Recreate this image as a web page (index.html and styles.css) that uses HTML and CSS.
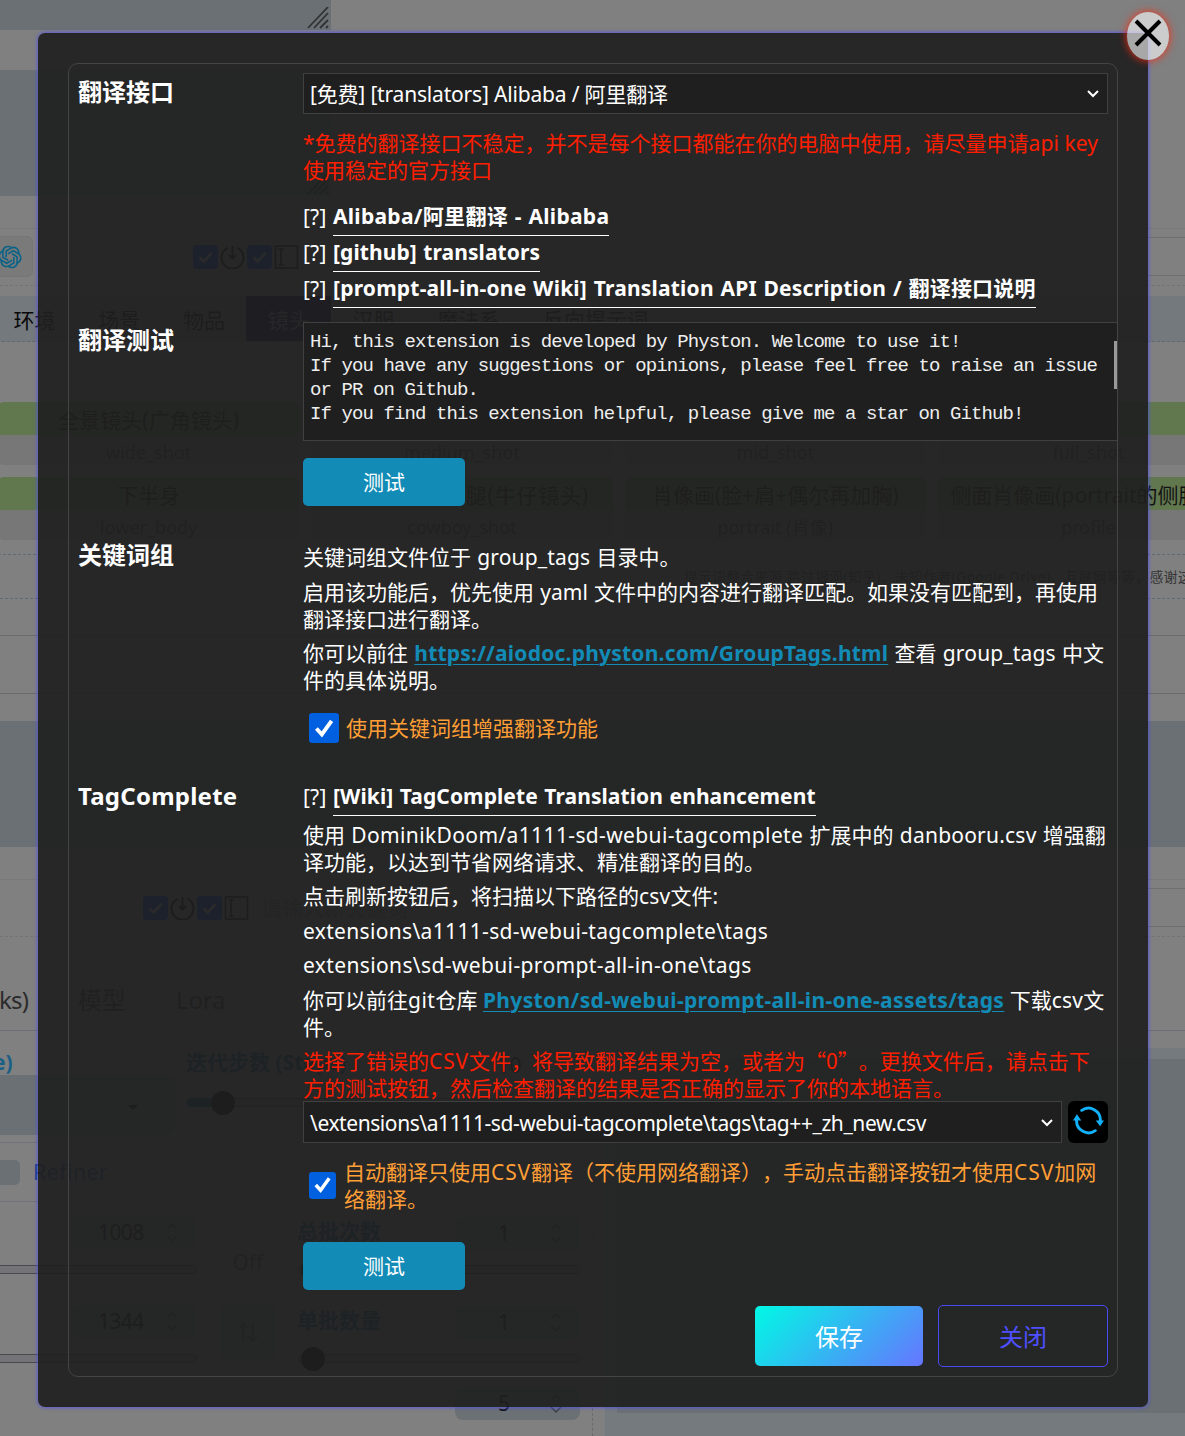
FILE: index.html
```
<!DOCTYPE html>
<html lang="zh-CN">
<head>
<meta charset="utf-8">
<title>翻译接口设置</title>
<link rel="stylesheet" href="styles.css">
</head>
<body>
<svg width="0" height="0" class="defs">
  <symbol id="check" viewBox="0 0 24 24"><path d="M6 12.5l4.2 4L18 8" fill="none" stroke="currentColor" stroke-width="2.6"/></symbol>
  <symbol id="power" viewBox="0 0 24 24"><path d="M7 2.8A11 11 0 1 0 17 2.800M12 1v12M8.500 10l3.500 3.500 3.500-3.500" fill="none" stroke="currentColor" stroke-width="2"/></symbol>
  <symbol id="field" viewBox="0 0 24 24"><path d="M1 1h22v22H1zM4 4h5M4 20h5M6.500 4v16" fill="none" stroke="currentColor" stroke-width="1.500"/></symbol>
  <symbol id="grip" viewBox="0 0 22 22"><path d="M1 21L21 0M7 21L21 6M13 21l8-8M19 21l2-2" fill="none" stroke="currentColor" stroke-width="1.800"/></symbol>
  <symbol id="spin" viewBox="0 0 12 20"><path d="M1 6l5-5 5 5M1 13l5 5 5-5" fill="none" stroke="currentColor" stroke-width="1.500"/></symbol>
  <symbol id="chev" viewBox="0 0 12 8"><path d="M1 1l5 5 5-5" fill="none" stroke="currentColor" stroke-width="2"/></symbol>
</svg>

<div class="page">
  <div class="prompt prompt-first"><svg class="grip"><use href="#grip"/></svg></div>
  <div class="gap40"></div>
  <div class="prompt prompt-second"><svg class="grip"><use href="#grip"/></svg></div>
  <div class="tools">
    <span class="gpt"><svg viewBox="0 0 24 24"><g fill="none" stroke="#0d6386" stroke-width="1.500"><path id="petal" d="M8.500 12V6.500L13 3.800c4-2 8 1.500 7 5.700"/><use href="#petal" transform="rotate(60 12 12)"/><use href="#petal" transform="rotate(120 12 12)"/><use href="#petal" transform="rotate(180 12 12)"/><use href="#petal" transform="rotate(240 12 12)"/><use href="#petal" transform="rotate(300 12 12)"/></g></svg></span>
    <div class="icons icons-a"><svg class="box"><use href="#check"/></svg><svg><use href="#power"/></svg><svg class="box"><use href="#check"/></svg><svg><use href="#field"/></svg></div>
  </div>
  <div class="tabs"><span>环境</span><span>场景</span><span>物品</span><span class="on">镜头</span><span>汉服</span><span>魔法系</span><span>反向提示词</span></div>
  <div class="cards">
    <div class="card"><b>全景镜头(广角镜头)</b><i>wide_shot</i></div>
    <div class="card"><b>中景镜头</b><i>medium_shot</i></div>
    <div class="card"><b>中镜头</b><i>mid_shot</i></div>
    <div class="card"><b>全身照</b><i>full_shot</i></div>
    <div class="card"><b>下半身</b><i>lower_body</i></div>
    <div class="card"><b class="wide">头部以下至大腿(牛仔镜头)</b><i>cowboy_shot</i></div>
    <div class="card"><b>肖像画(脸+肩+偶尔再加胸)</b><i>portrait (肖像)</i></div>
    <div class="card"><b>侧面肖像画(portrait的侧脸像)</b><i>profile</i></div>
  </div>
  <div class="note">提示词整合来源 路过银河(知乎)、未知作者(Google Drive)、互联网等等，感谢这些作者</div>
  <div class="rule r1"></div><div class="rule r2"></div>
  <div class="negative"></div>
  <div class="tools2">
    <div class="icons icons-b"><svg class="box"><use href="#check"/></svg><svg><use href="#power"/></svg><svg class="box"><use href="#check"/></svg><svg><use href="#field"/></svg></div>
    <span class="hint">请输入新关键词</span>
  </div>
  <div class="maintabs"><span class="ks">ks)</span><span>模型</span><span>Lora</span></div>
  <div class="lower">
    <div class="params">
      <div class="sampler">
        <div class="drop"><em>e)</em><div class="dropbox"><u></u></div></div>
        <div class="steps"><div class="head"><em>迭代步数 (Steps)</em><span class="num plain">10</span></div><div class="track"><s class="fill"></s><s class="thumb"></s></div></div>
      </div>
      <div class="refiner"><s></s><span>Refiner</span></div>
      <div class="dims">
        <div class="dim"><span class="num">1008<svg><use href="#spin"/></svg></span><div class="track"></div><span class="num">1344<svg><use href="#spin"/></svg></span><div class="track"></div></div>
        <div class="mid"><span class="off">Off</span><span class="swap">⇅</span></div>
        <div class="batch"><div class="head"><em>总批次数</em><span class="num">1<svg><use href="#spin"/></svg></span></div><div class="track"><s class="thumb"></s></div><div class="head"><em>单批数量</em><span class="num">1<svg><use href="#spin"/></svg></span></div><div class="track"><s class="thumb"></s></div><div class="head"><em></em><span class="num">5<svg><use href="#spin"/></svg></span></div></div>
      </div>
    </div>
    <div class="output"><div class="canvas"></div></div>
  </div>
</div>

<div class="modal">
  <button class="close" aria-label="关闭"><svg viewBox="0 0 28 28"><path d="M2 2l24 24M26 2L2 26" stroke="#000" stroke-width="4"/></svg></button>
  <div class="panel">
    <section class="row row-api">
      <h3>翻译接口</h3>
      <div class="body">
        <div class="select s-a"><span>[免费] [translators] Alibaba / 阿里翻译</span><svg><use href="#chev"/></svg></div>
        <p class="warn">*免费的翻译接口不稳定，并不是每个接口都能在你的电脑中使用，请尽量申请<span class="w0">api key</span><br>使用稳定的官方接口</p>
        <div class="ref"><span>[?]</span><a class="w2">Alibaba/阿里翻译 - Alibaba</a></div>
        <div class="ref"><span>[?]</span><a class="w0">[github] translators</a></div>
        <div class="ref"><span>[?]</span><a class="w1">[prompt-all-in-one Wiki] Translation API Description / 翻译接口说明</a></div>
      </div>
    </section>
    <section class="row row-test">
      <h3>翻译测试</h3>
      <div class="body">
        <div class="area">Hi, this extension is developed by Physton. Welcome to use it!<br>If you have any suggestions or opinions, please feel free to raise an issue<br>or PR on Github.<br>If you find this extension helpful, please give me a star on Github!<s></s></div>
        <button class="test">测试</button>
      </div>
    </section>
    <section class="row row-group">
      <h3>关键词组</h3>
      <div class="body">
        <p>关键词组文件位于 <span class="w1">group_tags</span> 目录中。</p>
        <p>启用该功能后，优先使用 yaml 文件中的内容进行翻译匹配。如果没有匹配到，再使用<br>翻译接口进行翻译。</p>
        <p>你可以前往 <a class="w2">https://aiodoc.physton.com/GroupTags.html</a> 查看 <span class="w1">group_tags</span> 中文<br>件的具体说明。</p>
        <label class="opt"><span class="cb big"><svg viewBox="0 0 24 24"><path d="M5 12l5 5.500L19 5" fill="none" stroke="#fff" stroke-width="3.600"/></svg></span><span>使用关键词组增强翻译功能</span></label>
      </div>
    </section>
    <section class="row row-tag">
      <h3 class="latin">TagComplete</h3>
      <div class="body">
        <div class="ref"><span>[?]</span><a class="w0">[Wiki] TagComplete Translation enhancement</a></div>
        <p>使用 <span class="w4">DominikDoom/a1111-sd-webui-tagcomplete</span> 扩展中的 <span class="w2">danbooru.csv</span> 增强翻<br>译功能，以达到节省网络请求、精准翻译的目的。</p>
        <p>点击刷新按钮后，将扫描以下路径的<span class="w2">csv</span>文件:</p>
        <p><span class="w3">extensions\a1111-sd-webui-tagcomplete\tags</span></p>
        <p><span class="w4">extensions\sd-webui-prompt-all-in-one\tags</span></p>
        <p class="tight">你可以前往<span class="w6">git</span>仓库 <a class="w4">Physton/sd-webui-prompt-all-in-one-assets/tags</a> 下载<span class="w2">csv</span>文<br>件。</p>
        <p class="warn">选择了错误的<span class="w7">CSV</span>文件，将导致翻译结果为空，或者为<span class="cjk">“0”</span>。更换文件后，请点击下<br>方的测试按钮，然后检查翻译的结果是否正确的显示了你的本地语言。</p>
        <div class="csv"><div class="select s-b"><span>\extensions\a1111-sd-webui-tagcomplete\tags\tag++_zh_new.csv</span><svg><use href="#chev"/></svg></div>
          <button class="refresh" aria-label="刷新"><svg viewBox="0 0 32 32"><g fill="none" stroke="#12b2fb" stroke-width="3" stroke-linecap="round"><path d="M9 5.500A12.300 12.300 0 0 1 28.300 16"/><path d="M23 26.500A12.300 12.300 0 0 1 3.700 16"/></g><path d="M23.500 16h8.500l-4 6zM0 16l4-6.500 4.500 6.500z" fill="#12b2fb"/></svg></button></div>
        <label class="opt two"><span class="cb"><svg viewBox="0 0 24 24"><path d="M5 12l5 5.500L19 5" fill="none" stroke="#fff" stroke-width="3.600"/></svg></span><span>自动翻译只使用<span class="w7">CSV</span>翻译（不使用网络翻译），手动点击翻译按钮才使用<span class="w7">CSV</span>加网<br>络翻译。</span></label>
        <button class="test">测试</button>
      </div>
    </section>
    <footer><button class="save">保存</button><button class="cancel">关闭</button></footer>
  </div>
</div>
</body>
</html>
```
FILE: styles.css
```
* { box-sizing: border-box; }
body { margin: 0; width: 1185px; height: 1436px; overflow: hidden; position: relative; background: #808080; color: #fff; font: 21px/27px "Noto Sans", "Noto Sans CJK SC", sans-serif; text-spacing-trim: space-all; }
.defs { position: absolute; }
h3, p { margin: 0; }
button { font: inherit; padding: 0; border: 0; }
em, i, b { font-style: normal; font-weight: normal; }
s, u { text-decoration: none; }

/* underlying page, dimmed */
.page { height: 1436px; overflow: hidden; color: #262626; }
.prompt { width: 331px; background: #6b7074; display: flex; align-items: flex-end; justify-content: flex-end; }
.prompt-first { height: 30px; }
.prompt-second { height: 126px; }
.gap40 { height: 40px; }
.grip { width: 22px; height: 22px; margin: 0 2px 1px 0; color: #303233; }
.tools { height: 90px; padding-top: 40px; display: flex; border-bottom: 1px dashed #747474; background: linear-gradient(#797979, #797979) 0 32px / 100% 1px no-repeat, linear-gradient(#6f6f6f, #6f6f6f) 100% 41px / 40px 1px no-repeat, linear-gradient(#6f6f6f, #6f6f6f) 100% 79px / 40px 1px no-repeat; }
.gpt { width: 45px; height: 41px; margin-left: -12px; flex: none; background: #7a7a7a; border: 1px solid #757575; border-radius: 6px; display: flex; align-items: center; justify-content: center; }
.gpt svg { width: 26px; height: 26px; margin-left: -2px; }
.icons { display: flex; gap: 2px; height: 24px; color: #000; }
.icons svg { width: 25px; height: 24px; }
.icons .box { background: #0038b0; border-radius: 4px; color: #a0a0a0; }
.icons-a { margin: 9px 0 0 160px; }
.icons-a, .icons-b { flex: none; }
.tabs { height: 46px; margin-top: 10px; margin-left: -8px; display: flex; background: #74797d; border-bottom: 1px dashed #63686c; line-height: 49px; white-space: nowrap; color: #080808; }
.tabs span { padding: 0 21.250px 0 21.500px; }
.tabs .on { background: #180c48; color: #777; }
.cards { margin: 60px 0 0 -2px; padding-bottom: 14px; display: grid; grid-template-columns: repeat(4, 301.300px); gap: 12px; border-bottom: 1px dashed #5f6a73; }
.card { height: 63px; border-radius: 6px; overflow: hidden; background: #777; display: flex; flex-direction: column; }
.card b { height: 33px; line-height: 36px; background: #61774e; color: #111; display: flex; justify-content: center; white-space: nowrap; }
.card .wide { letter-spacing: .8px; }
.card i { line-height: 34px; font-size: 18px; text-align: center; color: #333; }
.note { height: 44px; line-height: 45px; padding-left: 684px; font-size: 13.500px; letter-spacing: .62px; white-space: nowrap; border-bottom: 1px dashed #5f6a73; overflow: hidden; color: #333; }
.rule { border-bottom: 1px solid #6b6b6b; }
.r1 { height: 37px; }
.r2 { height: 58px; }
.negative { height: 126px; margin-top: 27px; background: #6b7074; }
.tools2 { height: 90px; padding: 49px 0 0 143px; display: flex; gap: 12px; border-bottom: 1px dashed #747474; background: linear-gradient(#797979, #797979) 0 32px / 100% 1px no-repeat, linear-gradient(#6f6f6f, #6f6f6f) 100% 41px / 40px 1px no-repeat, linear-gradient(#6f6f6f, #6f6f6f) 100% 79px / 40px 1px no-repeat; }
.hint { color: #5c5c60; line-height: 24px; }
.maintabs { height: 94px; padding-top: 49px; font-size: 24px; display: flex; border-bottom: 1px solid #6c6f73; color: #2b2b2b; }
.maintabs span { width: 98px; letter-spacing: -.2px; }
.maintabs .ks { width: 78px; letter-spacing: -.8px; text-indent: -1px; }
.lower { height: 405px; display: flex; }
.params { width: 605px; flex: none; }
.params em { color: #0c3f66; font-weight: 700; }
.sampler { display: flex; height: 112px; padding-top: 18px; border-bottom: 1px solid #6f7276; }
.drop { width: 175px; margin-right: 11px; }
.drop em { display: block; height: 26px; margin-left: -7px; color: #1b5f87; }
.dropbox { height: 60px; background: #6b7074; border-radius: 0 8px 8px 0; display: flex; justify-content: flex-end; align-items: center; padding: 4px 37px 0 0; }
.dropbox u { border: 5px solid transparent; border-top-color: #000; border-bottom: 0; }
.steps { width: 394px; }
.head { display: flex; justify-content: space-between; height: 35px; align-items: center; }
.batch .head em { margin-top: -5px; margin-left: -1px; }
.steps .head { height: 31px; align-items: flex-start; }
.num { width: 125px; height: 33px; padding: 0 17px 0 27px; display: flex; justify-content: space-between; align-items: center; background: #6b7074; border-radius: 8px; color: #111; letter-spacing: -.6px; }
.batch .num { padding-left: 43px; }
.num svg { width: 14px; height: 20px; color: #3a3f44; }
.num.plain { background: none; padding-left: 43px; }
.track { height: 9px; border: 1px solid #48494d; background: #747478; border-radius: 5px; display: flex; align-items: center; }
.steps .track { margin-top: 18px; }
.fill { width: 24px; height: 9px; background: #04406a; border-radius: 5px 0 0 5px; }
.thumb { width: 24px; height: 24px; border-radius: 50%; background: #0c0c0c; flex: none; }
.batch .thumb { margin-left: 2px; }
.refiner { height: 59px; padding-top: 17px; display: flex; gap: 13px; border-bottom: 1px solid #6f7276; color: #123f7c; letter-spacing: .6px; }
.refiner s { width: 20px; height: 25px; background: #6b7074; border-radius: 0 5px 5px 0; }
.refiner span { line-height: 24px; }
.dims { display: flex; width: 593px; height: 234px; padding-top: 14px; border-right: 1px dashed #6b6b6b; }
.dim { width: 197px; }
.dim .num { margin-left: 71px; }
.dim .track { margin: 16px 0 31px; border-left: 0; border-radius: 0 5px 5px 0; }
.mid { width: 54px; margin: 33px 24px 0; display: flex; flex-direction: column; align-items: center; color: #3a4044; }
.swap { margin-top: 27px; width: 54px; height: 58px; line-height: 58px; text-align: center; background: #6b7074; border-radius: 8px; }
.batch { width: 282px; margin-left: -1px; }
.batch .track { margin: 14px 0 31px; }
.batch .head:last-child { margin-top: -8px; }
.output { flex: 1; background: #747a7d; margin-top: 17px; padding: 11px 0 0 12px; }
.canvas { height: 354px; background: #6b7074; }

/* dialog */
.modal { position: absolute; left: 38px; top: 33px; width: 1110px; height: 1374px; padding: 30px; border-radius: 7px; background: rgba(31, 31, 31, .92); box-shadow: 0 0 4px #4a4aff; }
.close { position: absolute; left: 1089px; top: -21px; width: 42px; height: 48px; border-radius: 50%; background: rgba(255, 255, 255, .6); box-shadow: 0 0 8px #ff2a10; display: flex; justify-content: center; padding-top: 7px; }
.close svg { width: 28px; height: 28px; }
.panel { width: 1050px; height: 1314px; border: 1px solid #444; border-radius: 10px; padding: 9px 9px 0; display: flex; flex-direction: column; }
.row { display: grid; grid-template-columns: 225px 805px; }
.row-api { height: 249px; }
.row-test { height: 218px; }
.row-group { height: 239px; }
.row-tag { height: 526px; }
h3 { font-size: 24px; line-height: 38px; font-weight: 700; }
.latin { letter-spacing: .25px; }
.select { height: 41px; border: 1px solid #404040; background: #1f1f1f; display: flex; justify-content: space-between; align-items: center; padding: 2px 8px 0 6px; white-space: nowrap; }
.select svg { width: 12px; height: 8px; margin-top: -2px; }
.s-a span { letter-spacing: -.180px; }
.s-b { width: 759px; height: 42px; padding-top: 3px; }
.s-b span { letter-spacing: -.420px; }
.warn { color: #ff1e00; }
.row-api .warn { margin: 16px 0 16px; }
.row-api .warn, .tight { word-spacing: 0; }
.ref { height: 36px; display: flex; gap: 2px; white-space: nowrap; }
.ref span { width: 28px; line-height: 34px; letter-spacing: .2px; }
.ref a { font-weight: 700; border-bottom: 1px solid #fff; line-height: 33px; word-spacing: 1px; }
p { margin-bottom: 7.500px; white-space: nowrap; word-spacing: .8px; }
p a { color: #128cb7; font-weight: 700; text-decoration: underline; text-decoration-thickness: 1px; text-underline-offset: 3px; }
.w0 { letter-spacing: .080px; }
.w1 { letter-spacing: .160px; }
.w2 { letter-spacing: .220px; }
.w3 { letter-spacing: .330px; }
.w4 { letter-spacing: .370px; }
.w6 { letter-spacing: .500px; }
.w7 { letter-spacing: .900px; }
.ref .w1 { letter-spacing: .210px; }
.ref .w2 { letter-spacing: .290px; }
.cjk { font-family: "Noto Sans CJK SC", sans-serif; }
.area { position: relative; width: 814px; height: 119px; border: 1px solid #404040; border-right: 0; background: #1f1f1f; padding: 7px 6px; font: 19px/24px "Liberation Mono", monospace; letter-spacing: -.910px; white-space: nowrap; color: #eee; }
.area s { position: absolute; right: 0; top: 18px; width: 3px; height: 48px; background: #999; }
.test { display: block; width: 162px; height: 48px; border-radius: 5px; background: #128cb7; color: #fff; line-height: 49px; }
.row-test .test { margin-top: 17px; }
.row-group .body { padding-top: 4px; }
.row-test h3 { margin-top: -1px; }
.row-group h3 { margin-top: -4px; }
.opt { display: flex; color: #ff9f35; white-space: nowrap; align-items: center; padding-left: 6px; gap: 7px; }
.row-group .opt { margin-top: 17.500px; line-height: 33px; }
.cb { width: 27px; height: 27px; border-radius: 3px; background: #0060df; display: flex; align-items: center; justify-content: center; }
.cb svg { width: 23px; height: 24px; }
.cb.big { width: 30px; height: 30px; }
.cb.big svg { width: 26px; height: 27px; }
.row-tag .ref { margin: 1px 0 5.500px; }
.row-tag h3 { margin-top: -2px; }
.row-tag .warn { margin: -1px 0 1px; }
.csv { display: flex; justify-content: space-between; margin-top: -2px; }
.refresh { width: 40px; height: 42px; border-radius: 6px; background: #000; padding-bottom: 4px; display: flex; align-items: center; justify-content: center; }
.refresh svg { width: 31px; height: 31px; }
.two { margin: 16px 0 29px; gap: 8px; }
.two .cb { margin-top: -2px; }
footer { display: flex; justify-content: flex-end; align-items: center; gap: 15px; }
.save { width: 168px; height: 60px; border-radius: 5px; color: #fff; background: linear-gradient(135deg, #00f9e5, #6675ff); font-size: 24px; }
.cancel { width: 170px; height: 62px; border: 1px solid #4b4bf5; border-radius: 5px; background: none; color: #4f4fff; font-size: 24px; }
```
